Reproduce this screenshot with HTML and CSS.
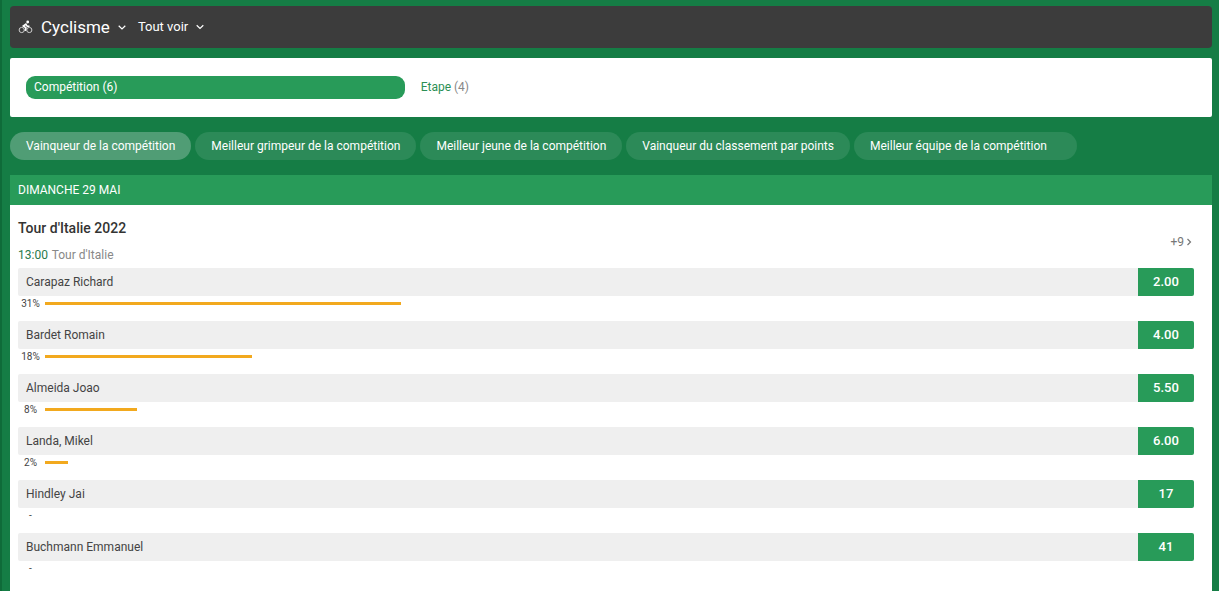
FILE: index.html
```html
<!DOCTYPE html>
<html lang="fr">
<head>
<meta charset="utf-8">
<meta name="viewport" content="width=device-width, initial-scale=1">
<title>Cyclisme</title>
<link rel="stylesheet" href="styles.css">
</head>
<body>
<div class="page">
  <header class="topbar">
    <svg class="sport-icon" viewBox="0 0 14 14" aria-hidden="true">
      <circle cx="3.2" cy="10" r="2.6"/>
      <circle cx="10.8" cy="10" r="2.6"/>
      <path class="body" d="M8 3.6 4.8 6 7.4 7.8 6.8 10.8M7.4 4.6 8.8 6.2H11"/>
      <circle class="head" cx="9.2" cy="2" r="1.4"/>
    </svg>
    <button class="menu menu-sport" type="button">Cyclisme
      <svg class="chevron" viewBox="0 0 8 8" aria-hidden="true"><path d="M.7 2.8 4 6 7.3 2.8"/></svg>
    </button>
    <button class="menu" type="button">Tout voir
      <svg class="chevron" viewBox="0 0 8 8" aria-hidden="true"><path d="M.7 2.3 4 5.5 7.3 2.3"/></svg>
    </button>
  </header>

  <nav class="groups">
    <a class="group active" href="#competition">Compétition <span class="count">(6)</span></a>
    <a class="group" href="#etape">Etape <span class="count">(4)</span></a>
  </nav>

  <div class="markets">
    <button class="market active" type="button">Vainqueur de la compétition</button>
    <button class="market" type="button">Meilleur grimpeur de la compétition</button>
    <button class="market" type="button">Meilleur jeune de la compétition</button>
    <button class="market" type="button">Vainqueur du classement par points</button>
    <button class="market market-last" type="button">Meilleur équipe de la compétition</button>
  </div>

  <main class="events">
    <h2 class="date">DIMANCHE 29 MAI</h2>
    <section class="event">
      <div class="event-head">
        <div>
          <h3 class="title">Tour d'Italie 2022</h3>
          <p class="when"><time>13:00</time> Tour d'Italie</p>
        </div>
        <a class="more" href="#more">+9
          <svg class="arrow" viewBox="0 0 6 8" aria-hidden="true"><path d="M1.5 1 4.5 4 1.5 7"/></svg>
        </a>
      </div>
      <ul class="runners">
        <li class="runner">
          <div class="line"><span class="name">Carapaz Richard</span><button class="odds" type="button">2.00</button></div>
          <div class="share"><span class="percent">31%</span><span class="track"><span class="bar" style="width:31%"></span></span></div>
        </li>
        <li class="runner">
          <div class="line"><span class="name">Bardet Romain</span><button class="odds" type="button">4.00</button></div>
          <div class="share"><span class="percent">18%</span><span class="track"><span class="bar" style="width:18%"></span></span></div>
        </li>
        <li class="runner">
          <div class="line"><span class="name">Almeida Joao</span><button class="odds" type="button">5.50</button></div>
          <div class="share"><span class="percent">8%</span><span class="track"><span class="bar" style="width:8%"></span></span></div>
        </li>
        <li class="runner">
          <div class="line"><span class="name">Landa, Mikel</span><button class="odds" type="button">6.00</button></div>
          <div class="share"><span class="percent">2%</span><span class="track"><span class="bar" style="width:2%"></span></span></div>
        </li>
        <li class="runner">
          <div class="line"><span class="name">Hindley Jai</span><button class="odds" type="button">17</button></div>
          <div class="share"><span class="percent">-</span></div>
        </li>
        <li class="runner">
          <div class="line"><span class="name">Buchmann Emmanuel</span><button class="odds" type="button">41</button></div>
          <div class="share"><span class="percent">-</span></div>
        </li>
      </ul>
    </section>
  </main>
</div>
</body>
</html>
```

FILE: styles.css
```css
* {
  box-sizing: border-box;
}

body {
  margin: 0;
  background: #157d45;
  color: #444;
  font-family: Roboto, "Liberation Sans", sans-serif;
  font-size: 12px;
}

button {
  border: 0;
  margin: 0;
  font: inherit;
  cursor: pointer;
}

a {
  text-decoration: none;
}

h2,
h3,
p,
ul {
  margin: 0;
  padding: 0;
}

.page {
  display: flex;
  flex-direction: column;
  min-height: 100vh;
  padding: 6px 7px 0 8px;
  border-left: 2px solid #0f6b39;
}

.topbar {
  display: flex;
  align-items: center;
  height: 42px;
  padding: 0 8px;
  border-radius: 4px;
  background: #3c3c3c;
}

.sport-icon {
  width: 15px;
  height: 14px;
  margin-right: 8px;
  fill: none;
  stroke: #ccc;
  stroke-width: 1;
}

.sport-icon .body {
  stroke: #fff;
  stroke-width: 1.6;
}

.sport-icon .head {
  fill: #fff;
  stroke: none;
}

.menu {
  display: flex;
  align-items: center;
  gap: 8px;
  margin-right: 12px;
  padding: 0;
  background: none;
  color: #fff;
  font-size: 13px;
  line-height: 20px;
}

.menu-sport {
  font-size: 17px;
}

.chevron {
  width: 8px;
  height: 8px;
  fill: none;
  stroke: #fff;
  stroke-width: 1.2;
}

.groups {
  display: grid;
  grid-template-columns: repeat(3, 1fr);
  gap: 16px;
  margin-top: 10px;
  padding: 18px 18px 18px 16px;
  border-radius: 2px;
  background: #fff;
}

.group {
  border-radius: 9px;
  color: #2c8f55;
  line-height: 23px;
}

.group .count {
  color: #888;
}

.group.active {
  padding: 0 8px;
  background: #289b59;
  color: #fff;
}

.group.active .count {
  color: #fff;
}

.markets {
  display: flex;
  flex-wrap: wrap;
  gap: 4px;
  margin: 15px 0;
}

.market {
  height: 28px;
  padding: 0 16px;
  border-radius: 14px;
  background: #2c8a58;
  color: #fff;
}

.market.active {
  background: #509d75;
}

.market-last {
  padding-right: 30px;
}

.events {
  flex: 1;
  background: #fff;
}

.date {
  padding: 0 8px;
  background: #289b59;
  color: #fff;
  font-size: 12px;
  font-weight: 400;
  line-height: 30px;
}

.event {
  padding: 11px 18px 0 8px;
}

.event-head {
  display: flex;
  align-items: center;
  justify-content: space-between;
}

.title {
  color: #333;
  font-size: 14px;
  font-weight: 500;
  line-height: 24px;
}

.when {
  padding-top: 2px;
  color: #888;
  line-height: 26px;
}

.when time {
  margin-right: 1px;
  color: #2a7a4b;
}

.more {
  display: flex;
  align-items: center;
  gap: 2px;
  padding-right: 2px;
  color: #777;
}

.arrow {
  width: 6px;
  height: 8px;
  fill: none;
  stroke: #777;
  stroke-width: 1.2;
}

.runners {
  list-style: none;
}

.runner {
  height: 53px;
}

.runner:last-child {
  height: 43px;
}

.line {
  display: flex;
  height: 28px;
}

.name {
  flex: 1;
  padding: 0 8px;
  border-radius: 2px 0 0 2px;
  background: #efefef;
  line-height: 28px;
}

.odds {
  width: 56px;
  padding: 0 0 1px;
  border-radius: 0 2px 2px 0;
  background: #289b59;
  color: #fff;
  font-size: 13px;
  font-weight: 500;
}

.share {
  display: flex;
  align-items: center;
  gap: 2px;
  height: 15px;
}

.percent {
  width: 25px;
  font-size: 10px;
  text-align: center;
}

.track {
  flex: 1;
}

.bar {
  display: block;
  height: 3px;
  background: #f2a91e;
}
```
